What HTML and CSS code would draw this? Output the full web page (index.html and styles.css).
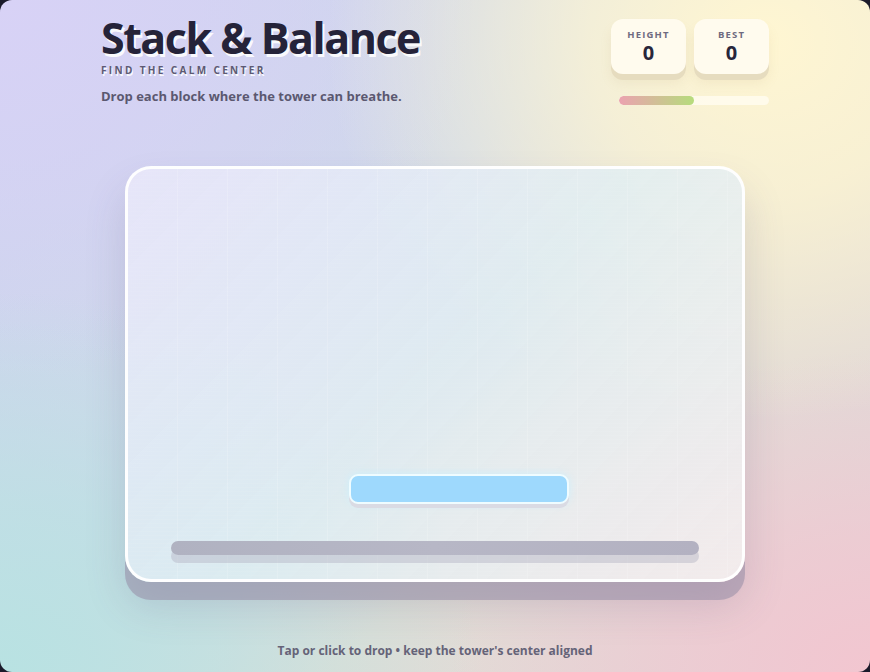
FILE: index.html
```html
<!DOCTYPE html>
<html>
<head>
<meta charset="utf-8">
<link rel="stylesheet" href="styles.css">
</head>
<body>
<div class="app">
  <header class="top">
    <div class="brand">
      <h1 class="title">Stack &amp; Balance</h1>
      <div class="tagline">FIND THE CALM CENTER</div>
      <p class="sub">Drop each block where the tower can breathe.</p>
    </div>
    <div class="stats">
      <div class="boxes">
        <div class="stat"><span class="label">HEIGHT</span><span class="val">0</span></div>
        <div class="stat"><span class="label">BEST</span><span class="val">0</span></div>
      </div>
      <div class="meter"><div class="fill"></div></div>
    </div>
  </header>
  <main class="stage">
    <div class="card">
      <div class="grid"></div>
      <div class="blockrow"><div class="block" style="left: 24px"></div></div>
      <div class="base"></div>
    </div>
  </main>
  <footer class="foot">Tap or click to drop • keep the tower's center aligned</footer>
</div>
</body>
</html>
```
FILE: styles.css
```css
* { box-sizing: border-box; }
html, body { margin: 0; height: 100%; }
body {
  background: #1b1a2a;
  font-family: "Open Sans", "Noto Sans", sans-serif;
  overflow: hidden;
}
.app {
  width: 870px;
  height: 672px;
  border-radius: 12px;
  overflow: hidden;
  position: relative;
  background:
    radial-gradient(ellipse 440px 380px at 88% 6%, rgba(255,246,210,1) 0%, rgba(255,246,210,0.75) 40%, rgba(255,246,210,0) 100%),
    radial-gradient(ellipse 420px 320px at 100% 100%, rgba(242,198,208,1) 0%, rgba(242,198,208,0.6) 45%, rgba(242,198,208,0) 100%),
    radial-gradient(ellipse 480px 380px at 0% 100%, rgba(184,226,226,1) 0%, rgba(184,226,226,0.65) 45%, rgba(184,226,226,0) 100%),
    radial-gradient(ellipse 480px 380px at 0% 0%, rgba(216,210,246,1) 0%, rgba(216,210,246,0.6) 50%, rgba(216,210,246,0) 100%),
    linear-gradient(135deg, #cbd2ef 0%, #d0d9ea 40%, #e2ded6 65%, #e2d3d8 100%);
  display: flex;
  flex-direction: column;
  align-items: center;
}
.top {
  width: 668px;
  display: flex;
  justify-content: space-between;
  padding-top: 14px;
}
.title {
  margin: 0;
  font-size: 43px;
  font-weight: 700;
  line-height: 48px;
  letter-spacing: -1.5px;
  color: #252339;
  text-shadow: 2px 3px 0 rgba(255,255,255,0.9);
}
.tagline {
  margin-top: 3px;
  font-size: 10px;
  font-weight: 700;
  letter-spacing: 2.35px;
  color: #5d5a72;
  line-height: 11px;
  text-shadow: 1px 2px 0 rgba(255,255,255,0.9);
}
.sub {
  margin: 11px 0 0;
  font-size: 13px;
  font-weight: 700;
  color: #5b5870;
  line-height: 18px;
}
.stats {
  padding-top: 5px;
  display: flex;
  flex-direction: column;
  align-items: flex-end;
}
.boxes { display: flex; gap: 8px; }
.stat {
  width: 75px;
  height: 55px;
  border-radius: 12px;
  background: #fffbee;
  box-shadow: 0 6px 0 #e6dcbf, 0 9px 12px rgba(180,160,110,0.12);
  display: flex;
  flex-direction: column;
  align-items: center;
  padding-top: 10px;
}
.label {
  font-size: 9.5px;
  font-weight: 700;
  letter-spacing: 1.2px;
  color: #6e6a80;
  line-height: 12px;
}
.val {
  font-size: 20px;
  font-weight: 700;
  color: #28263a;
  line-height: 24px;
}
.meter {
  margin-top: 22px;
  width: 150px;
  height: 9px;
  border-radius: 5px;
  background: rgba(255,252,238,0.85);
  overflow: hidden;
}
.fill {
  width: 75px;
  height: 100%;
  border-radius: 5px;
  background: linear-gradient(90deg, #eba2b0, #b6dc7c);
}
.stage {
  margin-top: 61px;
}
.card {
  position: relative;
  width: 620px;
  height: 416px;
  border-radius: 26px;
  border: 3px solid rgba(255,255,255,0.95);
  background: linear-gradient(135deg, rgba(234,232,250,0.85) 0%, rgba(224,238,244,0.8) 50%, rgba(244,240,240,0.85) 100%);
  box-shadow: 0 18px 0 rgba(150,140,165,0.55), 0 24px 40px rgba(90,80,120,0.18);
  display: flex;
  flex-direction: column;
  align-items: center;
}
.grid {
  position: absolute;
  inset: 0;
  border-radius: 23px;
  background-image:
    repeating-linear-gradient(90deg, rgba(255,255,255,0) 0 49px, rgba(255,255,255,0.16) 49px 50px),
    repeating-linear-gradient(0deg, rgba(255,255,255,0) 0 3px, rgba(255,255,255,0.06) 3px 4px);
  pointer-events: none;
}
.blockrow {
  margin-top: 305px;
  position: relative;
}
.block {
  position: relative;
  width: 220px;
  height: 30px;
  border-radius: 9px;
  background: #9ed9fd;
  border: 2px solid #effcff;
  box-shadow: 0 4px 0 #dadbe4, 0 0 8px rgba(200,240,255,0.8);
}
.base {
  margin-top: 37px;
  position: relative;
  width: 528px;
  height: 14px;
  border-radius: 7px;
  background: linear-gradient(90deg, #b0b2c1, #b7b7c6 50%, #b3b1c1);
  box-shadow: 0 8px 0 rgba(180,180,195,0.45);
}
.foot {
  margin-top: auto;
  margin-bottom: 13px;
  font-size: 12px;
  font-weight: 700;
  color: #656378;
}
```
